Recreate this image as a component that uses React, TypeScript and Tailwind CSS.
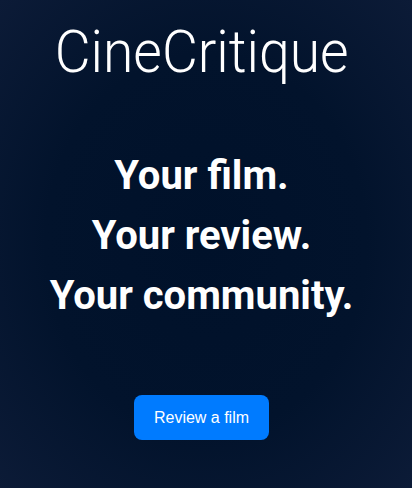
export default function App() {
  return (
    <div className="w-[412px] h-[488px] overflow-hidden pr-[9px] bg-[radial-gradient(ellipse_at_center,#00112a_0%,#02132c_55%,#0c1b37_100%)] flex flex-col items-center text-white">
      <h1 className="mt-[16px] text-[60px] leading-[72px] font-light scale-x-[0.92] font-['Roboto',sans-serif]">
        CineCritique
      </h1>

      <div className="mt-[58px] flex flex-col items-center text-[40px] leading-[60px] font-bold font-['Roboto',sans-serif]">
        <span>Your film.</span>
        <span>Your review.</span>
        <span>Your community.</span>
      </div>

      <button
        type="button"
        className="mt-[69px] h-[45px] px-[20px] rounded-[8px] bg-[#007bff] text-white text-[16px] font-['Liberation_Sans',Arial,sans-serif]"
      >
        Review a film
      </button>
    </div>
  )
}
